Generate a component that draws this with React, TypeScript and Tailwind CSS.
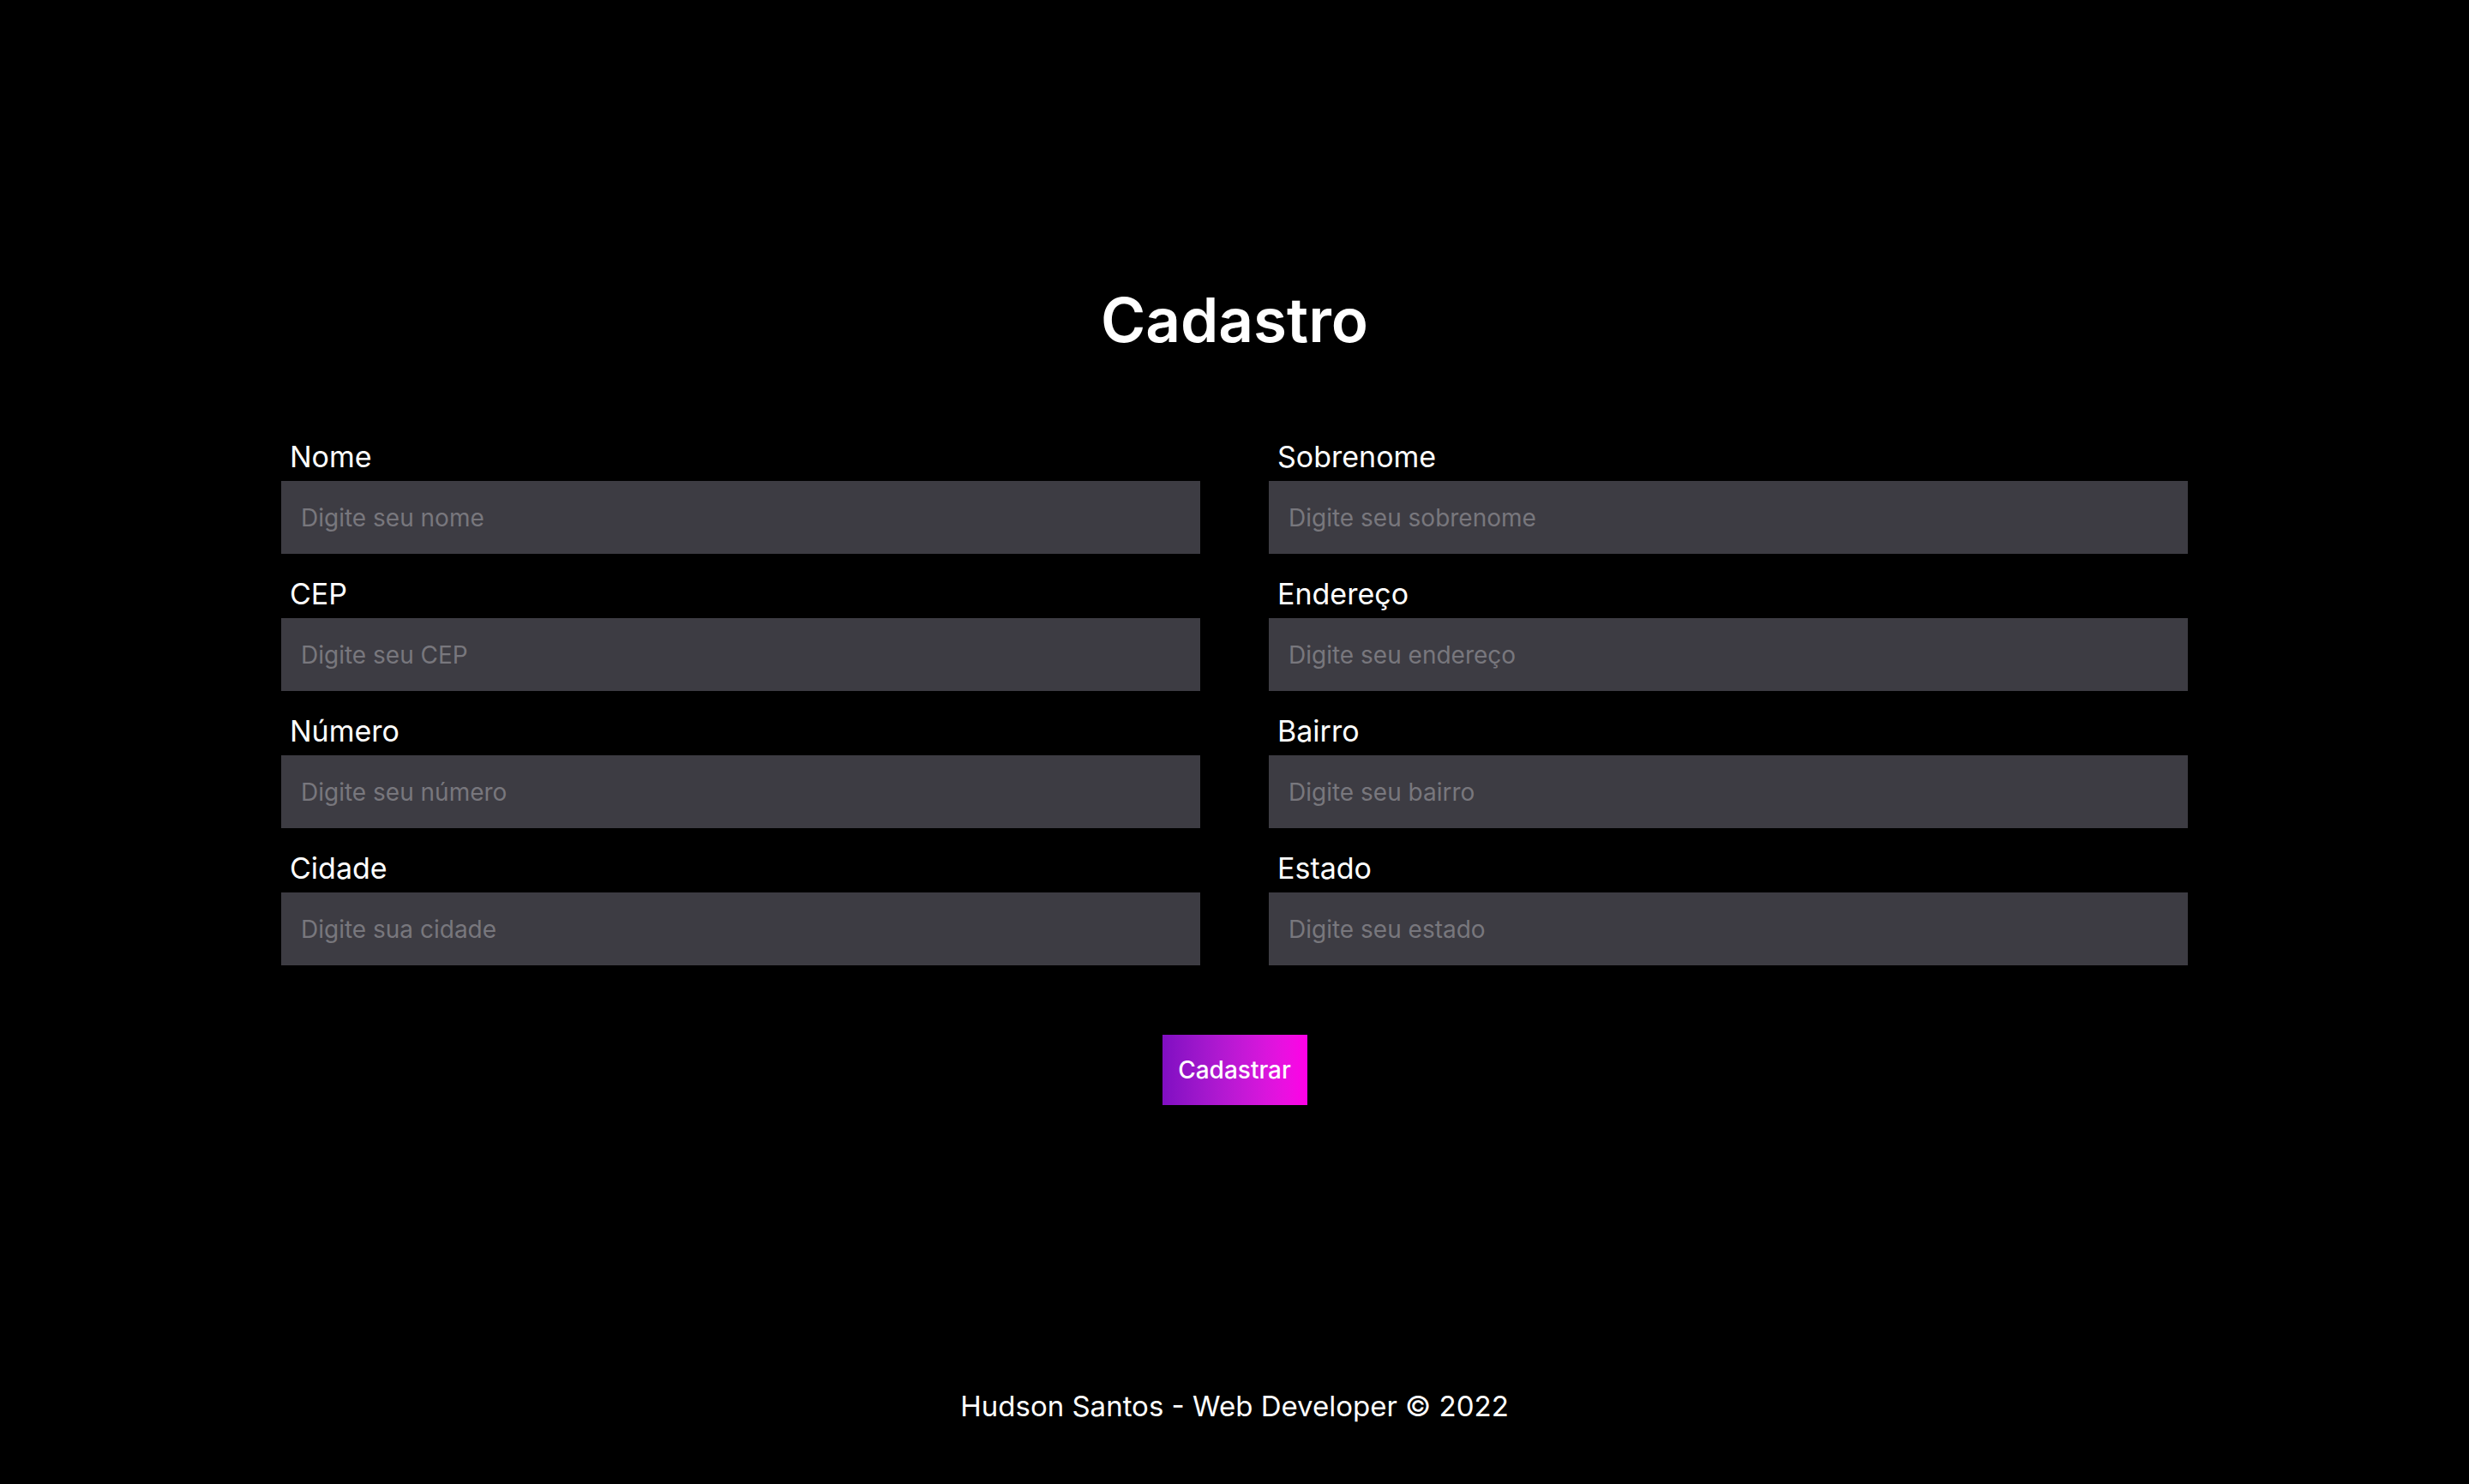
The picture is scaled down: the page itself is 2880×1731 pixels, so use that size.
import React from 'react';

interface Field {
	label: string;
	placeholder: string;
}

const fields: Field[] = [
	{ label: 'Nome', placeholder: 'Digite seu nome' },
	{ label: 'Sobrenome', placeholder: 'Digite seu sobrenome' },
	{ label: 'CEP', placeholder: 'Digite seu CEP' },
	{ label: 'Endereço', placeholder: 'Digite seu endereço' },
	{ label: 'Número', placeholder: 'Digite seu número' },
	{ label: 'Bairro', placeholder: 'Digite seu bairro' },
	{ label: 'Cidade', placeholder: 'Digite sua cidade' },
	{ label: 'Estado', placeholder: 'Digite seu estado' },
];

const App: React.FC = () => {
	return (
		<div className="flex h-screen flex-col overflow-hidden bg-black font-['Inter',sans-serif] text-white">
			<main className="flex flex-1 flex-col items-center pt-[319px]">
				<h1 className="text-[71px] font-semibold leading-[108px]">Cadastro</h1>
				<form className="mt-[80px] grid w-[2224px] grid-cols-2 gap-x-[80px] gap-y-[21px]">
					{fields.map((field) => (
						<div key={field.label} className="flex flex-col">
							<label className="mb-[3px] pl-[10px] text-[34px] leading-[51px]">{field.label}</label>
							<input
								type="text"
								placeholder={field.placeholder}
								className="h-[85px] w-full bg-[#3d3c43] px-[23px] text-[28px] text-white outline-none placeholder:text-[#78777d]"
							/>
						</div>
					))}
				</form>
				<button
					type="button"
					className="mt-[81px] h-[82px] w-[169px] bg-gradient-to-r from-[#800ec2] to-[#ff00e6] text-[28px] font-medium text-white"
				>
					Cadastrar
				</button>
			</main>
			<footer className="pb-[65px] text-center text-[33px] leading-[51px]">
				Hudson Santos - Web Developer © 2022
			</footer>
		</div>
	);
};

export default App;
